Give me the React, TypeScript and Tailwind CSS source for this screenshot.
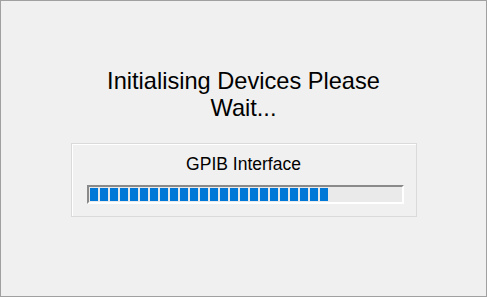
import React from "react";

export default function App() {
  const blocks = Array.from({ length: 24 });
  return (
    <div
      className="w-[487px] h-[297px] bg-[#f0f0f0] border border-[#a0a0a0] flex flex-col items-center box-border"
      style={{ fontFamily: '"Liberation Sans", Arial, sans-serif' }}
    >
      <div className="mt-[67px] text-[23.6px] leading-[27px] text-black text-center w-[330px]">
        Initialising Devices Please
        <br />
        Wait...
      </div>
      <div className="mt-[21px] w-[346px] h-[74px] border border-[#dadada] shadow-[inset_1px_1px_0_#ffffff] flex flex-col box-border">
        <div className="pt-[10px] text-[17.5px] leading-[20px] text-black text-center">
          GPIB Interface
        </div>
        <div className="mt-[11px] ml-[15px] w-[317px] h-[19px] border-2 border-t-[#8a8a8a] border-l-[#8a8a8a] border-r-[#ffffff] border-b-[#ffffff] bg-[#eaeaea] p-px flex gap-[2px] box-border">
          {blocks.map((_, i) => (
            <div key={i} className="w-[8px] h-full bg-[#0078d7]" />
          ))}
        </div>
      </div>
    </div>
  );
}
